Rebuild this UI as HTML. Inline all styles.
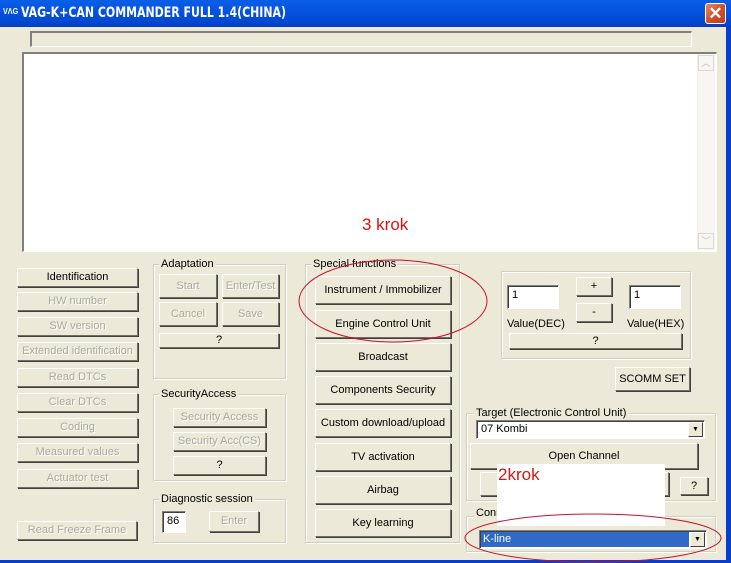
<!DOCTYPE html>
<html><head><meta charset="utf-8"><style>
*{box-sizing:border-box;margin:0;padding:0}
body{width:731px;height:563px;overflow:hidden;background:#ECE9D8;position:relative;font-family:"Liberation Sans",sans-serif;font-size:11px;color:#000}
.a{position:absolute}
.title{left:0;top:0;width:731px;height:27px;background:linear-gradient(#0A5FE6,#0553E0 40%,#0047D0 85%,#0A3CB8)}
.tt{left:21px;top:0;color:#fff;font-weight:bold;font-size:14px;line-height:27px;font-family:"DejaVu Sans Condensed","Liberation Sans",sans-serif;transform:scaleX(0.87);transform-origin:0 0;white-space:nowrap}
.logo{left:3px;top:7px;font-size:8px;font-weight:bold;color:#fff;line-height:9px;transform:scaleX(0.9);transform-origin:0 0}
.close{left:705px;top:3px;width:21px;height:21px;border:1px solid #fff;border-radius:3px;background:linear-gradient(135deg,#E8896A,#D3512F 50%,#C03A1A);color:#fff;text-align:center;font-size:17px;line-height:19px;font-weight:bold}
.btn{position:absolute;background:#ECE9D8;border-top:1px solid #fff;border-left:1px solid #fff;border-right:1px solid #716F64;border-bottom:1px solid #716F64;box-shadow:1px 1px 0 #404040;text-align:center;font-size:11px}
.dis{color:#ACA899;text-shadow:1px 1px 0 #fff}
.grp{position:absolute;border:1px solid #D0D0BF;box-shadow:inset 1px 1px 0 #fff,1px 1px 0 #fff}
.lbl{position:absolute;background:#ECE9D8;padding:0 2px;font-size:11px;line-height:12px}
.inp{position:absolute;background:#fff;border-top:1px solid #808080;border-left:1px solid #808080;border-right:1px solid #fff;border-bottom:1px solid #fff;box-shadow:inset 1px 1px 0 #404040;font-size:11px;padding:3px 0 0 4px}
.dd{position:absolute;width:15px;height:15px;right:1px;top:1px;background:#ECE9D8;border-top:1px solid #fff;border-left:1px solid #fff;border-right:1px solid #404040;border-bottom:1px solid #404040;font-size:7px;text-align:center;line-height:13px}
</style></head><body>
<div class="a title"></div>
<div class="a tt">VAG-K+CAN COMMANDER FULL 1.4(CHINA)</div>
<div class="a logo">VΛG</div>
<div class="a close">✕</div>
<div class="a" style="left:726px;top:27px;width:5px;height:536px;background:#0B3EC8"></div>
<div class="a" style="left:0;top:560px;width:731px;height:3px;background:#0B3EC8"></div>

<div class="a" style="left:30px;top:31px;width:662px;height:16px;border-top:2px solid #808080;border-left:2px solid #808080;border-right:1px solid #fff;border-bottom:1px solid #fff"></div>
<div class="a" style="left:22px;top:52px;width:695px;height:200px;background:#fff;border-top:2px solid #808080;border-left:2px solid #808080;border-right:1px solid #fff;border-bottom:1px solid #fff"></div>
<div class="a" style="left:697px;top:54px;width:18px;height:196px;background:#F7F6F0;border-left:1px solid #eee"></div>
<div class="a" style="left:698px;top:55px;width:16px;height:16px;border:1px solid #DDDACE;color:#C0BDB0;font-size:9px;text-align:center;line-height:14px">︿</div>
<div class="a" style="left:698px;top:233px;width:16px;height:16px;border:1px solid #DDDACE;color:#C0BDB0;font-size:9px;text-align:center;line-height:14px">﹀</div>
<div class="a" style="left:362px;top:215px;color:#E01010;font-size:17px">3 krok</div>

<div class="btn" style="left:17px;top:268px;width:121px;height:19px;line-height:17px">Identification</div>
<div class="btn dis" style="left:17px;top:292px;width:121px;height:19px;line-height:17px">HW number</div>
<div class="btn dis" style="left:17px;top:317px;width:121px;height:19px;line-height:17px">SW version</div>
<div class="btn dis" style="left:17px;top:342px;width:121px;height:19px;line-height:17px">Extended identification</div>
<div class="btn dis" style="left:17px;top:368px;width:121px;height:19px;line-height:17px">Read DTCs</div>
<div class="btn dis" style="left:17px;top:393px;width:121px;height:19px;line-height:17px">Clear DTCs</div>
<div class="btn dis" style="left:17px;top:418px;width:121px;height:19px;line-height:17px">Coding</div>
<div class="btn dis" style="left:17px;top:443px;width:121px;height:19px;line-height:17px">Measured values</div>
<div class="btn dis" style="left:17px;top:469px;width:121px;height:19px;line-height:17px">Actuator test</div>
<div class="btn dis" style="left:17px;top:521px;width:120px;height:19px;line-height:17px">Read Freeze Frame</div>

<div class="grp" style="left:153px;top:264px;width:133px;height:115px"></div>
<div class="lbl" style="left:159px;top:258px">Adaptation</div>
<div class="btn dis" style="left:159px;top:274px;width:58px;height:24px;line-height:22px">Start</div>
<div class="btn dis" style="left:222px;top:274px;width:57px;height:24px;line-height:22px">Enter/Test</div>
<div class="btn dis" style="left:159px;top:302px;width:58px;height:24px;line-height:22px">Cancel</div>
<div class="btn dis" style="left:222px;top:302px;width:57px;height:24px;line-height:22px">Save</div>
<div class="btn" style="left:159px;top:333px;width:120px;height:15px;line-height:13px">?</div>

<div class="grp" style="left:153px;top:394px;width:133px;height:87px"></div>
<div class="lbl" style="left:159px;top:388px">SecurityAccess</div>
<div class="btn dis" style="left:173px;top:408px;width:93px;height:19px;line-height:17px">Security Access</div>
<div class="btn dis" style="left:173px;top:432px;width:93px;height:19px;line-height:17px">Security Acc(CS)</div>
<div class="btn" style="left:173px;top:456px;width:93px;height:19px;line-height:17px">?</div>

<div class="grp" style="left:153px;top:499px;width:133px;height:44px"></div>
<div class="lbl" style="left:159px;top:493px">Diagnostic session</div>
<div class="inp" style="left:162px;top:511px;width:24px;height:22px">86</div>
<div class="btn dis" style="left:209px;top:511px;width:50px;height:21px;line-height:19px">Enter</div>

<div class="grp" style="left:305px;top:264px;width:155px;height:279px"></div>
<div class="lbl" style="left:311px;top:258px">Special functions</div>
<div class="btn" style="left:315px;top:276px;width:136px;height:28px;line-height:26px">Instrument / Immobilizer</div>
<div class="btn" style="left:315px;top:310px;width:136px;height:28px;line-height:26px">Engine Control Unit</div>
<div class="btn" style="left:315px;top:343px;width:136px;height:28px;line-height:26px">Broadcast</div>
<div class="btn" style="left:315px;top:376px;width:136px;height:28px;line-height:26px">Components Security</div>
<div class="btn" style="left:315px;top:409px;width:136px;height:28px;line-height:26px">Custom download/upload</div>
<div class="btn" style="left:315px;top:443px;width:136px;height:28px;line-height:26px">TV activation</div>
<div class="btn" style="left:315px;top:476px;width:136px;height:28px;line-height:26px">Airbag</div>
<div class="btn" style="left:315px;top:509px;width:136px;height:28px;line-height:26px">Key learning</div>

<div class="grp" style="left:501px;top:271px;width:190px;height:88px"></div>
<div class="inp" style="left:507px;top:285px;width:52px;height:24px">1</div>
<div class="btn" style="left:576px;top:277px;width:36px;height:19px;line-height:16px">+</div>
<div class="btn" style="left:576px;top:303px;width:36px;height:19px;line-height:16px">-</div>
<div class="inp" style="left:629px;top:285px;width:52px;height:24px">1</div>
<div class="a" style="left:507px;top:318px">Value(DEC)</div>
<div class="a" style="left:627px;top:318px">Value(HEX)</div>
<div class="btn" style="left:509px;top:333px;width:173px;height:16px;line-height:14px">?</div>
<div class="btn" style="left:615px;top:367px;width:75px;height:24px;line-height:22px">SCOMM SET</div>

<div class="grp" style="left:466px;top:413px;width:250px;height:88px"></div>
<div class="lbl" style="left:474px;top:407px">Target (Electronic Control Unit)</div>
<div class="inp" style="left:476px;top:420px;width:229px;height:19px;padding-top:2px">07 Kombi<div class="dd">▼</div></div>
<div class="btn" style="left:470px;top:443px;width:228px;height:26px;line-height:24px">Open Channel</div>
<div class="btn" style="left:480px;top:472px;width:189px;height:24px"></div>
<div class="btn" style="left:680px;top:477px;width:28px;height:18px;line-height:16px">?</div>

<div class="grp" style="left:466px;top:516px;width:250px;height:36px"></div>
<div class="lbl" style="left:474px;top:507px">Conn</div>
<div class="inp" style="left:479px;top:530px;width:228px;height:19px;padding:1px 0 0 1px"><div style="background:#316AC5;color:#fff;height:15px;width:208px;line-height:14px;padding-left:2px">K-line</div><div class="dd">▼</div></div>

<div class="a" style="left:497px;top:464px;width:168px;height:62px;background:#fff"></div>
<div class="a" style="left:498px;top:465px;color:#D01818;font-size:17px">2krok</div>

<svg class="a" style="left:0;top:0" width="731" height="563">
<ellipse cx="393" cy="301" rx="94" ry="41" fill="none" stroke="#C8102E" stroke-width="1"/>
<ellipse cx="593" cy="538" rx="128" ry="24" fill="none" stroke="#C8102E" stroke-width="1"/>
</svg>
</body></html>
